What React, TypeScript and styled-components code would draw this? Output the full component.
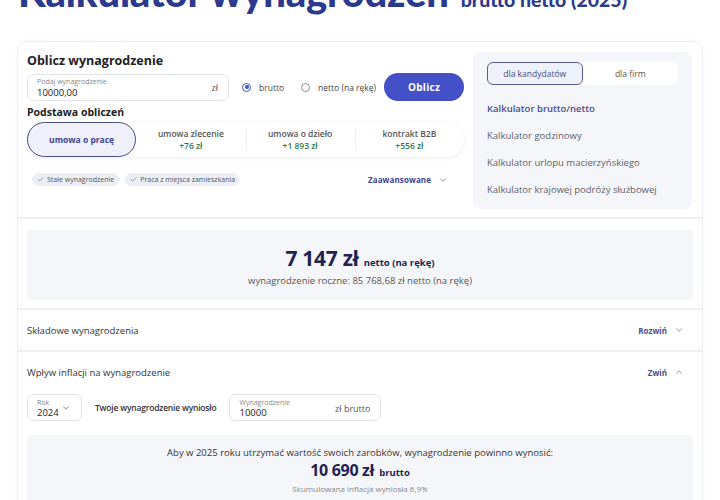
import React from 'react';
import styled, { createGlobalStyle } from 'styled-components';
import { ChevronDown, ChevronUp, Check } from 'lucide-react';

const GlobalStyle = createGlobalStyle`
  body {
    margin: 0;
    background: #ffffff;
    font-family: "Open Sans", "Noto Sans", sans-serif;
    color: #333;
    overflow: hidden;
  }
`;

const colors = {
    navy: '#2c3a8e',
    indigo: '#4450c6',
    link: '#3d4390',
    text: '#333840',
    muted: '#666a72',
    soft: '#f5f6fa',
    line: '#eff0f4',
    green: '#2f7a4f',
};

const Page = styled.div`
    padding: 0 17px;
`;

const TitleRow = styled.div`
    display: flex;
    align-items: baseline;
    gap: 12px;
    margin-top: -30px;
    margin-bottom: 27px;
    padding-left: 1px;
    color: ${colors.navy};
    font-family: "Lato", sans-serif;
`;

const Title = styled.h1`
    margin: 0;
    font-size: 40px;
    line-height: 44px;
    font-weight: 900;
    letter-spacing: -0.2px;
`;

const Subtitle = styled.span`
    font-size: 19.5px;
    font-weight: 900;
`;

const Card = styled.div`
    border: 1px solid #eeeff3;
    border-radius: 10px;
    box-shadow: 0 0 6px rgba(0, 0, 0, 0.03);
    background: #fff;
`;

const TopSection = styled.div`
    display: grid;
    grid-template-columns: 437px 1fr;
    gap: 9px;
    padding: 9px 10px 8px 9px;
    border-bottom: 2px solid ${colors.line};
`;

const CalcColumn = styled.div`
    display: flex;
    flex-direction: column;
    padding-top: 1px;
`;

const SectionHeading = styled.h2`
    margin: 0 0 4px;
    font-size: 12.5px;
    font-weight: 700;
    color: #222;
`;

const SmallHeading = styled.h3`
    margin: 4px 0 3px;
    font-size: 10.5px;
    font-weight: 700;
    color: #222;
`;

const InputRow = styled.div`
    display: flex;
    align-items: center;
`;

const Field = styled.div<{ $width: number }>`
    width: ${p => p.$width}px;
    height: 27px;
    box-sizing: border-box;
    border: 1px solid #e3e4ea;
    border-radius: 6px;
    padding: 1px 10px 0 9px;
    display: flex;
    align-items: center;
    justify-content: space-between;
    background: #fff;
`;

const FieldValue = styled.div`
    display: flex;
    flex-direction: column;
    line-height: 1.3;
`;

const FieldLabel = styled.span`
    font-size: 7px;
    color: #888;
`;

const FieldText = styled.span`
    font-size: 9.5px;
    line-height: 11px;
    color: #222;
`;

const FieldUnit = styled.span`
    font-size: 9px;
    color: #555;
`;

const RadioGroup = styled.div`
    display: flex;
    gap: 17px;
    margin-left: 13px;
    flex: 1;
`;

const RadioLabel = styled.label`
    display: flex;
    align-items: center;
    gap: 8px;
    font-size: 8.5px;
    color: #444;
`;

const RadioDot = styled.span<{ $checked?: boolean }>`
    width: 9px;
    height: 9px;
    border-radius: 50%;
    box-sizing: border-box;
    border: 1px solid ${p => (p.$checked ? colors.indigo : '#8a8d96')};
    display: flex;
    align-items: center;
    justify-content: center;

    &::after {
        content: '';
        width: 4px;
        height: 4px;
        border-radius: 50%;
        background: ${p => (p.$checked ? colors.indigo : 'transparent')};
    }
`;

const PrimaryButton = styled.button`
    width: 80px;
    height: 28px;
    border: none;
    border-radius: 14px;
    background: ${colors.indigo};
    color: #fff;
    font-family: inherit;
    font-size: 10px;
    font-weight: 700;
    letter-spacing: 0.3px;
`;

const ContractTabs = styled.div`
    display: grid;
    grid-template-columns: repeat(4, 1fr);
    height: 35px;
    border-radius: 18px;
    box-shadow: 0 1px 4px rgba(0, 0, 0, 0.08);
    background: #fff;
`;

const ContractTab = styled.div<{ $active?: boolean; $divider?: boolean }>`
    display: flex;
    flex-direction: column;
    align-items: center;
    justify-content: center;
    line-height: 1.35;
    font-size: 8.5px;
    font-weight: 600;
    color: #555;
    position: relative;
    box-sizing: border-box;
    border-radius: 18px;
    border: ${p => (p.$active ? '1.5px solid #4a4e86' : 'none')};
    background: ${p => (p.$active ? '#eff0fa' : 'transparent')};

    ${p => p.$active && `color: #3f4592; font-weight: 700;`}

    ${p => p.$divider && `
        &::before {
            content: '';
            position: absolute;
            left: 0;
            top: 7px;
            bottom: 7px;
            width: 1px;
            background: #eceef2;
        }
    `}
`;

const Amount = styled.span`
    color: ${colors.green};
`;

const OptionsRow = styled.div`
    display: flex;
    align-items: center;
    gap: 6px;
    margin-top: 16px;
    padding-left: 5px;
`;

const Chip = styled.span`
    display: inline-flex;
    align-items: center;
    gap: 3px;
    height: 13px;
    padding: 0 5px;
    border-radius: 7px;
    background: #eceef6;
    font-size: 7px;
    color: #555;
`;

const MoreToggle = styled.span`
    margin-left: auto;
    margin-right: 16px;
    display: inline-flex;
    align-items: center;
    gap: 7px;
    font-size: 8px;
    font-weight: 700;
    letter-spacing: 0.1px;
    color: ${colors.link};
`;

const SidePanel = styled.div`
    margin-top: 1px;
    height: 157px;
    border-radius: 8px;
    background: ${colors.soft};
    padding: 10px 14px 0;
    box-sizing: border-box;
`;

const Audience = styled.div`
    display: grid;
    grid-template-columns: 1fr 1fr;
    height: 23px;
    border-radius: 6px;
    background: #fff;
    margin-bottom: 10px;
`;

const AudienceOption = styled.div<{ $active?: boolean }>`
    display: flex;
    align-items: center;
    justify-content: center;
    font-size: 8.5px;
    color: ${p => (p.$active ? '#4a4e86' : '#555')};
    border-radius: 6px;
    box-sizing: border-box;
    border: ${p => (p.$active ? '1px solid #5a5d8e' : 'none')};
    background: ${p => (p.$active ? '#eef0fa' : 'transparent')};
`;

const CalcLink = styled.div<{ $current?: boolean }>`
    height: 27px;
    display: flex;
    align-items: center;
    font-size: 9.5px;
    font-weight: ${p => (p.$current ? 600 : 400)};
    color: ${p => (p.$current ? '#474b8f' : '#5e6168')};
`;

const ResultSection = styled.div`
    padding: 11px 9px 8px;
    border-bottom: 2px solid ${colors.line};
`;

const ResultBox = styled.div`
    height: 70px;
    background: ${colors.soft};
    border-radius: 4px;
    display: flex;
    flex-direction: column;
    align-items: center;
    justify-content: center;
`;

const InflationBox = styled.div`
    height: 90px;
    padding-top: 9px;
    box-sizing: border-box;
    background: ${colors.soft};
    border-radius: 4px;
    display: flex;
    flex-direction: column;
    align-items: center;
`;

const BigLine = styled.div`
    display: flex;
    align-items: baseline;
    gap: 5px;
    color: #1f2252;
`;

const BigAmount = styled.span<{ $size: number }>`
    font-size: ${p => p.$size}px;
    font-weight: 700;
    letter-spacing: -0.3px;
`;

const BigUnit = styled.span`
    font-size: 9.5px;
    font-weight: 700;
`;

const Caption = styled.div<{ $size: number; $color: string }>`
    font-size: ${p => p.$size}px;
    color: ${p => p.$color};
    margin-top: 2px;
`;

const AccordionRow = styled.div<{ $last?: boolean }>`
    height: 40px;
    padding: 0 18px 0 9px;
    display: flex;
    align-items: center;
    justify-content: space-between;
    border-bottom: ${p => (p.$last ? 'none' : `2px solid ${colors.line}`)};
    font-size: 9.5px;
    color: #333;
`;

const AccordionAction = styled.span`
    display: inline-flex;
    align-items: center;
    gap: 7px;
    font-size: 8px;
    font-weight: 700;
    color: #4a4e8c;
`;

const InflationBody = styled.div`
    padding: 2px 9px 0;
`;

const InflationControls = styled.div`
    display: flex;
    align-items: center;
    gap: 13px;
    margin-bottom: 14px;
`;

const ControlLabel = styled.span`
    font-size: 8.5px;
    font-weight: 600;
    letter-spacing: -0.2px;
    color: #333;
`;

export default function App() {
    return (
        <Page>
            <GlobalStyle />
            <TitleRow>
                <Title>Kalkulator wynagrodzeń</Title>
                <Subtitle>brutto netto (2025)</Subtitle>
            </TitleRow>

            <Card>
                <TopSection>
                    <CalcColumn>
                        <SectionHeading>Oblicz wynagrodzenie</SectionHeading>
                        <InputRow>
                            <Field $width={202}>
                                <FieldValue>
                                    <FieldLabel>Podaj wynagrodzenie</FieldLabel>
                                    <FieldText>10000,00</FieldText>
                                </FieldValue>
                                <FieldUnit>zł</FieldUnit>
                            </Field>
                            <RadioGroup>
                                <RadioLabel><RadioDot $checked />brutto</RadioLabel>
                                <RadioLabel><RadioDot />netto (na rękę)</RadioLabel>
                            </RadioGroup>
                            <PrimaryButton>Oblicz</PrimaryButton>
                        </InputRow>

                        <SmallHeading>Podstawa obliczeń</SmallHeading>
                        <ContractTabs>
                            <ContractTab $active>umowa o pracę</ContractTab>
                            <ContractTab>umowa zlecenie<Amount>+76 zł</Amount></ContractTab>
                            <ContractTab $divider>umowa o dzieło<Amount>+1 893 zł</Amount></ContractTab>
                            <ContractTab $divider>kontrakt B2B<Amount>+556 zł</Amount></ContractTab>
                        </ContractTabs>

                        <OptionsRow>
                            <Chip><Check size={7} strokeWidth={2} />Stałe wynagrodzenie</Chip>
                            <Chip><Check size={7} strokeWidth={2} />Praca z miejsca zamieszkania</Chip>
                            <MoreToggle>Zaawansowane <ChevronDown size={10} strokeWidth={1.5} /></MoreToggle>
                        </OptionsRow>
                    </CalcColumn>

                    <SidePanel>
                        <Audience>
                            <AudienceOption $active>dla kandydatów</AudienceOption>
                            <AudienceOption>dla firm</AudienceOption>
                        </Audience>
                        <CalcLink $current>Kalkulator brutto/netto</CalcLink>
                        <CalcLink>Kalkulator godzinowy</CalcLink>
                        <CalcLink>Kalkulator urlopu macierzyńskiego</CalcLink>
                        <CalcLink>Kalkulator krajowej podróży służbowej</CalcLink>
                    </SidePanel>
                </TopSection>

                <ResultSection>
                    <ResultBox>
                        <BigLine>
                            <BigAmount $size={21}>7 147 zł</BigAmount>
                            <BigUnit>netto (na rękę)</BigUnit>
                        </BigLine>
                        <Caption $size={9.5} $color="#555">wynagrodzenie roczne: 85 768,68 zł netto (na rękę)</Caption>
                    </ResultBox>
                </ResultSection>

                <AccordionRow>
                    Składowe wynagrodzenia
                    <AccordionAction>Rozwiń <ChevronDown size={10} strokeWidth={1.5} /></AccordionAction>
                </AccordionRow>
                <AccordionRow $last>
                    Wpływ inflacji na wynagrodzenie
                    <AccordionAction>Zwiń <ChevronUp size={10} strokeWidth={1.5} /></AccordionAction>
                </AccordionRow>

                <InflationBody>
                    <InflationControls>
                        <Field $width={55}>
                            <FieldValue>
                                <FieldLabel>Rok</FieldLabel>
                                <FieldText>2024</FieldText>
                            </FieldValue>
                            <ChevronDown size={10} strokeWidth={1.5} color="#444" />
                        </Field>
                        <ControlLabel>Twoje wynagrodzenie wyniosło</ControlLabel>
                        <Field $width={152}>
                            <FieldValue>
                                <FieldLabel>Wynagrodzenie</FieldLabel>
                                <FieldText>10000</FieldText>
                            </FieldValue>
                            <FieldUnit>zł brutto</FieldUnit>
                        </Field>
                    </InflationControls>
                    <InflationBox>
                        <Caption $size={9.5} $color="#333">Aby w 2025 roku utrzymać wartość swoich zarobków, wynagrodzenie powinno wynosić:</Caption>
                        <BigLine>
                            <BigAmount $size={16}>10 690 zł</BigAmount>
                            <BigUnit>brutto</BigUnit>
                        </BigLine>
                        <Caption $size={8} $color="#888">Skumulowana inflacja wyniosła 6,9%</Caption>
                    </InflationBox>
                </InflationBody>
            </Card>
        </Page>
    );
}
